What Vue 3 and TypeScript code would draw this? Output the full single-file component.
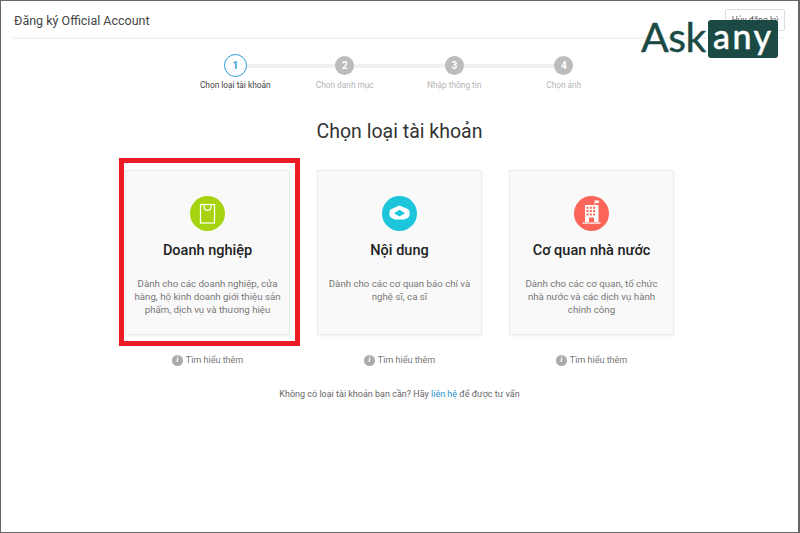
<template>
  <div class="page">
    <header class="top-bar">
      <h1 class="page-title">Đăng ký Official Account</h1>
      <button class="cancel-btn" type="button">Hủy đăng ký</button>
    </header>

    <ol class="stepper">
      <li v-for="(step, i) in steps" :key="step" class="step" :class="{ active: i === 0 }">
        <span class="step-dot">{{ i + 1 }}</span>
        <span class="step-label">{{ step }}</span>
      </li>
    </ol>

    <h2 class="heading">Chọn loại tài khoản</h2>

    <section class="cards">
      <div v-for="card in cards" :key="card.title" class="card-col">
        <article class="card">
          <span class="card-icon" :class="card.kind">
            <svg v-if="card.kind === 'shop'" viewBox="0 0 35 35" width="35" height="35" fill="none" stroke="#fff" stroke-width="1.2">
              <rect x="10.5" y="8.5" width="14" height="18.5" />
              <path d="M14 8.500v2.500c0 4.500 7 4.500 7 0V8.500" />
            </svg>
            <svg v-else-if="card.kind === 'content'" viewBox="0 0 35 35" width="35" height="35">
              <path fill="#fff" d="M17.500 9.500 25 12.800c1.600.7 2.500 1.900 2.500 3.200v3c0 1.300-.9 2.400-2.500 3.200l-3 1.300h-9l-3-1.300C8.400 21.400 7.500 20.300 7.500 19v-3c0-1.300.9-2.500 2.500-3.200z" />
              <path fill="#1cc5da" d="M17.500 13.800 23 17.200l-5.500 3.300-5.500-3.300z" />
            </svg>
            <svg v-else viewBox="0 0 35 35" width="35" height="35" fill="#fff">
              <path d="M20.500 4.500h.8v4h-.8z" />
              <path d="M21.300 4.500h4.200l-1 1.300 1 1.300h-4.200z" />
              <path fill-rule="evenodd" d="M11 9h13.500v17H20v-4.500h-5V26h-4zm1.500 1.700v2h2v-2zm3.300 0v2h2v-2zm3.300 0v2h2v-2zm-6.600 3.400v2h2v-2zm3.300 0v2h2v-2zm3.300 0v2h2v-2zm-6.600 3.400v2h2v-2zm3.300 0v2h2v-2zm3.300 0v2h2v-2z" />
              <path d="M8.500 26.500h18v1.200h-18z" />
            </svg>
          </span>
          <h3 class="card-title">{{ card.title }}</h3>
          <p class="card-text">{{ card.text }}</p>
        </article>
        <a class="more-link">
          <span class="info-dot">i</span>
          Tìm hiểu thêm
        </a>
      </div>
      <div class="highlight"></div>
    </section>

    <p class="contact">
      Không có loại tài khoản bạn cần? Hãy <a class="contact-link">liên hệ</a> để được tư vấn
    </p>

    <div class="logo">
      <span class="logo-ask">Ask</span>
      <span class="logo-any">any</span>
    </div>
  </div>
</template>

<script setup lang="ts">
interface AccountCard {
  kind: 'shop' | 'content' | 'office'
  title: string
  text: string
}

const steps: string[] = ['Chọn loại tài khoản', 'Chọn danh mục', 'Nhập thông tin', 'Chọn ảnh']

const cards: AccountCard[] = [
  {
    kind: 'shop',
    title: 'Doanh nghiệp',
    text: 'Dành cho các doanh nghiệp, cửa hàng, hộ kinh doanh giới thiệu sản phẩm, dịch vụ và thương hiệu',
  },
  {
    kind: 'content',
    title: 'Nội dung',
    text: 'Dành cho các cơ quan báo chí và nghệ sĩ, ca sĩ',
  },
  {
    kind: 'office',
    title: 'Cơ quan nhà nước',
    text: 'Dành cho các cơ quan, tổ chức nhà nước và các dịch vụ hành chính công',
  },
]
</script>

<style>
html,
body {
  margin: 0;
  background: #fff;
}
</style>

<style scoped>
.page {
  position: relative;
  box-sizing: border-box;
  width: 800px;
  height: 533px;
  overflow: hidden;
  border: 1px solid #666;
  border-right-width: 2px;
  background: #fff;
  font-family: Roboto, 'Liberation Sans', sans-serif;
  color: #555;
}

.top-bar {
  display: flex;
  align-items: flex-start;
  justify-content: space-between;
  box-sizing: border-box;
  height: 38px;
  margin: 0 13px 0 12px;
  border-bottom: 2px solid #f3f3f3;
}

.page-title {
  margin: 12px 0 0 1px;
  font-size: 12.5px;
  font-weight: 400;
  line-height: 15px;
  color: #444;
}

.cancel-btn {
  box-sizing: border-box;
  width: 60px;
  height: 22px;
  margin-top: 8px;
  padding: 0;
  border: 1px solid #ddd;
  border-radius: 2px;
  background: #fff;
  font-family: inherit;
  font-size: 8.5px;
  color: #555;
}

.stepper {
  display: grid;
  grid-template-columns: repeat(4, 109.5px);
  justify-content: center;
  margin: 16px 0 0;
  padding: 0;
  list-style: none;
  background: linear-gradient(#f0f0f0, #f0f0f0) center 9px / 328px 4px no-repeat;
}

.step {
  display: flex;
  flex-direction: column;
  align-items: center;
  height: 42px;
  font-size: 8.3px;
  color: #b5b5b5;
}

.step-dot {
  display: flex;
  align-items: center;
  justify-content: center;
  box-sizing: border-box;
  width: 19px;
  height: 19px;
  margin-top: 1px;
  border-radius: 50%;
  background: #bcbcbc;
  font-size: 10px;
  font-weight: 700;
  color: #fff;
}

.step-label {
  margin-top: 5px;
  white-space: nowrap;
}

.active .step-dot {
  width: 23px;
  height: 23px;
  margin-top: -1px;
  border: 1.5px solid #2a9bd8;
  background: #fff;
  color: #2a9bd8;
}

.active .step-label {
  margin-top: 3px;
  color: #444;
}

.heading {
  margin: 22px 0 0;
  font-size: 19.5px;
  font-weight: 400;
  line-height: 26px;
  text-align: center;
  color: #333;
}

.cards {
  position: relative;
  display: grid;
  grid-template-columns: repeat(3, 165px);
  gap: 27px;
  justify-content: center;
  margin: 25px 0 0;
}

.card-col {
  display: flex;
  flex-direction: column;
  align-items: center;
}

.card {
  display: flex;
  flex-direction: column;
  align-items: center;
  box-sizing: border-box;
  width: 165px;
  height: 165px;
  padding: 25px 8px 0;
  border: 1px solid #ececec;
  box-shadow: 0 1px 2px rgba(0, 0, 0, 0.06);
  background: #f9f9f9;
}

.card-icon {
  display: block;
  flex: none;
  width: 35px;
  height: 35px;
  border-radius: 50%;
}

.card-icon svg {
  display: block;
}

.shop {
  background: #a6d30f;
}

.content {
  background: #1cc5da;
}

.office {
  background: #fb6559;
}

.card-title {
  margin: 10px 0 0;
  font-size: 14.5px;
  font-weight: 500;
  line-height: 20px;
  white-space: nowrap;
  color: #222;
}

.card-text {
  margin: 16px 0 0;
  font-size: 9.7px;
  line-height: 13px;
  text-align: center;
  color: #777;
}

.more-link {
  display: flex;
  align-items: center;
  gap: 3px;
  margin-top: 18px;
  font-size: 9px;
  line-height: 14px;
  color: #777;
}

.info-dot {
  display: flex;
  align-items: center;
  justify-content: center;
  width: 11px;
  height: 11px;
  border-radius: 50%;
  background: #aaa;
  font-family: 'Liberation Serif', serif;
  font-size: 8px;
  font-style: italic;
  font-weight: 700;
  color: #fff;
}

.highlight {
  position: absolute;
  top: -12px;
  left: 118px;
  box-sizing: border-box;
  width: 181px;
  height: 188px;
  border: 5px solid #ed1c24;
  pointer-events: none;
}

.contact {
  margin: 20px 0 0;
  font-size: 9px;
  line-height: 14px;
  text-align: center;
  color: #666;
}

.contact-link {
  color: #2a8fd0;
}

.logo {
  position: absolute;
  top: 19px;
  left: 640px;
  display: flex;
  align-items: flex-start;
  gap: 3px;
  color: #1b4a45;
}

.logo-ask {
  width: 64px;
  margin-top: -1px;
  font-family: Lato, sans-serif;
  font-size: 41px;
  font-weight: 400;
  line-height: 36px;
  letter-spacing: -0.5px;
  white-space: nowrap;
  -webkit-text-stroke: 0.4px #1b4a45;
}

.logo-any {
  display: block;
  box-sizing: border-box;
  width: 70px;
  height: 38px;
  padding-left: 5px;
  border-radius: 3px;
  background: #1b4a45;
  font-family: Lato, sans-serif;
  font-size: 34px;
  font-weight: 500;
  line-height: 31px;
  letter-spacing: 2.5px;
  color: #fff;
  white-space: nowrap;
  -webkit-text-stroke: 0.4px #fff;
}
</style>
